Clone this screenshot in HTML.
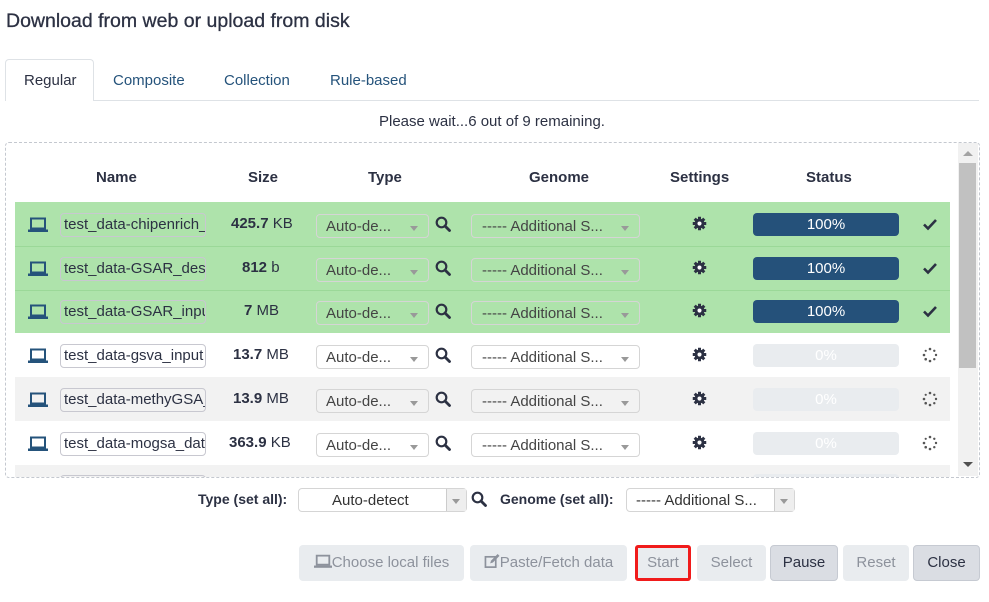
<!DOCTYPE html>
<html><head><meta charset="utf-8"><style>
*{box-sizing:border-box;margin:0;padding:0}
body{width:989px;height:602px;background:#fff;font-family:"Liberation Sans",sans-serif;color:#2c3143;position:relative;overflow:hidden;font-size:15px}
.a{position:absolute}
.t{white-space:nowrap}
.inp{position:absolute;height:24px;border:1px solid #c8c8d0;border-radius:4px;background:transparent;font-size:15px;line-height:22px;padding-left:3px;overflow:hidden;white-space:nowrap;color:#2c3143}
.sel{position:absolute;height:24px;border:1px solid #d5d5d5;border-radius:4px;background:transparent;font-size:15px;line-height:24px;padding-left:9px;white-space:nowrap;color:#444;overflow:hidden}
.sel:after{content:"";position:absolute;right:10px;top:11px;border-left:4px solid transparent;border-right:4px solid transparent;border-top:5px solid #999}
.bar{position:absolute;left:753px;width:146px;height:23px;border-radius:4px;text-align:center;line-height:23px;font-size:15px}
.btn{position:absolute;top:545px;height:36px;border-radius:4px;background:#e9ecef;color:#8d929c;font-size:15px;line-height:36px;text-align:center;white-space:nowrap}
.h{font-weight:bold;font-size:15px}
</style></head><body>
<div class="a t" style="left:6px;top:10px;font-size:19.5px;color:#2c3143;-webkit-text-stroke:0.3px #2c3143">Download from web or upload from disk</div>
<!-- tabs -->
<div class="a" style="left:5px;top:100px;width:974px;height:1px;background:#dee2e6"></div>
<div class="a" style="left:5px;top:59px;width:89px;height:42px;border:1px solid #dee2e6;border-bottom:none;border-radius:4px 4px 0 0;background:#fff"></div>
<div class="a t" style="left:24px;top:72px;color:#2c3143">Regular</div>
<div class="a t" style="left:113px;top:72px;color:#25537b">Composite</div>
<div class="a t" style="left:224px;top:72px;color:#25537b">Collection</div>
<div class="a t" style="left:330px;top:72px;color:#25537b">Rule-based</div>
<div class="a t" style="left:379px;top:113px;color:#2c3143">Please wait...6 out of 9 remaining.</div>
<!-- box -->
<div class="a" style="left:5px;top:142px;width:975px;height:336px;border:1px dashed #c4c8cf;border-radius:4px"></div>
<div class="a" style="left:958px;top:143px;width:20px;height:333px;background:#f1f1f1"></div>
<div class="a" style="left:959px;top:163px;width:17px;height:205px;background:#c1c1c1"></div>
<div class="a" style="left:963px;top:151px;border-left:5px solid transparent;border-right:5px solid transparent;border-bottom:5px solid #a3a3a3"></div>
<div class="a" style="left:963px;top:462px;border-left:5px solid transparent;border-right:5px solid transparent;border-top:5px solid #505050"></div>
<!-- headers -->
<div class="a t h" style="left:96px;top:169px">Name</div>
<div class="a t h" style="left:248px;top:169px">Size</div>
<div class="a t h" style="left:368px;top:169px">Type</div>
<div class="a t h" style="left:529px;top:169px">Genome</div>
<div class="a t h" style="left:670px;top:169px">Settings</div>
<div class="a t h" style="left:806px;top:169px">Status</div>
<!-- row backgrounds -->
<div class="a" style="left:15px;top:202px;width:935px;height:131px;background:#aee3ab"></div>
<div class="a" style="left:15px;top:246px;width:935px;height:1px;background:#9bd898"></div>
<div class="a" style="left:15px;top:290px;width:935px;height:1px;background:#9bd898"></div>
<div class="a" style="left:15px;top:377px;width:935px;height:44px;background:#f2f2f2"></div>
<div class="a" style="left:15px;top:465px;width:935px;height:12px;background:#f2f2f2;overflow:hidden">
  <div style="position:absolute;left:45px;top:10px;width:146px;height:20px;border:1px solid #c8c8d0;border-radius:4px"></div>
  <div style="position:absolute;left:738px;top:9px;width:146px;height:10px;background:#e9ecef;border-radius:4px"></div>
</div>

<svg width="0" height="0" style="position:absolute"><defs>
<symbol id="lap" viewBox="0 0 20 16"><rect x="3" y="1.5" width="14" height="10" fill="none" stroke="#25537b" stroke-width="2"/><rect x="0" y="12.5" width="20" height="2.5" fill="#25537b"/></symbol>
<symbol id="srch" viewBox="0 0 16 16"><circle cx="6.5" cy="6.5" r="4.8" fill="none" stroke="#2c3143" stroke-width="2.2"/><path d="M10 10L14.5 14.5" stroke="#2c3143" stroke-width="2.8" stroke-linecap="round"/></symbol>
<symbol id="gear" viewBox="0 0 16 16"><g fill="#2c3143"><circle cx="8" cy="8" r="5.2"/><rect x="6.4" y="0.8" width="3.2" height="14.4"/><rect x="0.8" y="6.4" width="14.4" height="3.2"/><rect x="6.4" y="0.8" width="3.2" height="14.4" transform="rotate(45 8 8)"/><rect x="6.4" y="0.8" width="3.2" height="14.4" transform="rotate(-45 8 8)"/></g><circle cx="8" cy="8" r="2.2" fill="#fff"/></symbol>
<symbol id="chk" viewBox="0 0 16 16"><path d="M2 8.5L6 12.5L14 4" fill="none" stroke="#2c3143" stroke-width="2.6"/></symbol>
<symbol id="spin" viewBox="0 0 16 16"><g fill="#555"><circle cx="8" cy="2" r="1.3"/><circle cx="12.3" cy="3.8" r="1.2"/><circle cx="14" cy="8" r="1.2"/><circle cx="12.3" cy="12.2" r="1.2"/><circle cx="8" cy="14" r="1.3"/><circle cx="3.7" cy="12.2" r="1.3"/><circle cx="2" cy="8" r="1.3"/><circle cx="3.7" cy="3.8" r="1.1"/></g></symbol>
</defs></svg>

<!-- row1 -->
<svg class="a" style="left:28px;top:217px" width="20" height="16"><use href="#lap"/></svg>
<div class="inp" style="left:60px;top:213px;width:146px">test_data-chipenrich_</div>
<div class="a t" style="left:231px;top:215px"><b>425.7</b> KB</div>
<div class="sel" style="left:316px;top:214px;width:113px">Auto-de...</div>
<svg class="a" style="left:435px;top:216px" width="16" height="16"><use href="#srch"/></svg>
<div class="sel" style="left:471px;top:214px;width:169px;padding-left:10px">----- Additional S...</div>
<svg class="a" style="left:692px;top:216px" width="15" height="15"><use href="#gear"/></svg>
<div class="bar" style="top:213px;background:#25517a;color:#fff">100%</div>
<svg class="a" style="left:922px;top:216px" width="16" height="16"><use href="#chk"/></svg>
<!-- row2 -->
<svg class="a" style="left:28px;top:261px" width="20" height="16"><use href="#lap"/></svg>
<div class="inp" style="left:60px;top:257px;width:146px">test_data-GSAR_desi</div>
<div class="a t" style="left:242px;top:259px"><b>812</b> b</div>
<div class="sel" style="left:316px;top:258px;width:113px">Auto-de...</div>
<svg class="a" style="left:435px;top:260px" width="16" height="16"><use href="#srch"/></svg>
<div class="sel" style="left:471px;top:258px;width:169px;padding-left:10px">----- Additional S...</div>
<svg class="a" style="left:692px;top:260px" width="15" height="15"><use href="#gear"/></svg>
<div class="bar" style="top:257px;background:#25517a;color:#fff">100%</div>
<svg class="a" style="left:922px;top:260px" width="16" height="16"><use href="#chk"/></svg>
<!-- row3 -->
<svg class="a" style="left:28px;top:304px" width="20" height="16"><use href="#lap"/></svg>
<div class="inp" style="left:60px;top:300px;width:146px">test_data-GSAR_inpu</div>
<div class="a t" style="left:244px;top:302px"><b>7</b> MB</div>
<div class="sel" style="left:316px;top:301px;width:113px">Auto-de...</div>
<svg class="a" style="left:435px;top:303px" width="16" height="16"><use href="#srch"/></svg>
<div class="sel" style="left:471px;top:301px;width:169px;padding-left:10px">----- Additional S...</div>
<svg class="a" style="left:692px;top:303px" width="15" height="15"><use href="#gear"/></svg>
<div class="bar" style="top:300px;background:#25517a;color:#fff">100%</div>
<svg class="a" style="left:922px;top:303px" width="16" height="16"><use href="#chk"/></svg>
<!-- row4 -->
<svg class="a" style="left:28px;top:348px" width="20" height="16"><use href="#lap"/></svg>
<div class="inp" style="left:60px;top:344px;width:146px">test_data-gsva_input</div>
<div class="a t" style="left:233px;top:346px"><b>13.7</b> MB</div>
<div class="sel" style="left:316px;top:345px;width:113px">Auto-de...</div>
<svg class="a" style="left:435px;top:347px" width="16" height="16"><use href="#srch"/></svg>
<div class="sel" style="left:471px;top:345px;width:169px;padding-left:10px">----- Additional S...</div>
<svg class="a" style="left:692px;top:347px" width="15" height="15"><use href="#gear"/></svg>
<div class="bar" style="top:344px;background:#e9ecef;color:#fff">0%</div>
<svg class="a" style="left:922px;top:347px" width="16" height="16"><use href="#spin"/></svg>
<!-- row5 -->
<svg class="a" style="left:28px;top:392px" width="20" height="16"><use href="#lap"/></svg>
<div class="inp" style="left:60px;top:388px;width:146px">test_data-methyGSA_</div>
<div class="a t" style="left:233px;top:390px"><b>13.9</b> MB</div>
<div class="sel" style="left:316px;top:389px;width:113px">Auto-de...</div>
<svg class="a" style="left:435px;top:391px" width="16" height="16"><use href="#srch"/></svg>
<div class="sel" style="left:471px;top:389px;width:169px;padding-left:10px">----- Additional S...</div>
<svg class="a" style="left:692px;top:391px" width="15" height="15"><use href="#gear"/></svg>
<div class="bar" style="top:388px;background:#e9ecef;color:#fff">0%</div>
<svg class="a" style="left:922px;top:391px" width="16" height="16"><use href="#spin"/></svg>
<!-- row6 -->
<svg class="a" style="left:28px;top:436px" width="20" height="16"><use href="#lap"/></svg>
<div class="inp" style="left:60px;top:432px;width:146px">test_data-mogsa_dat</div>
<div class="a t" style="left:229px;top:434px"><b>363.9</b> KB</div>
<div class="sel" style="left:316px;top:433px;width:113px">Auto-de...</div>
<svg class="a" style="left:435px;top:435px" width="16" height="16"><use href="#srch"/></svg>
<div class="sel" style="left:471px;top:433px;width:169px;padding-left:10px">----- Additional S...</div>
<svg class="a" style="left:692px;top:435px" width="15" height="15"><use href="#gear"/></svg>
<div class="bar" style="top:432px;background:#e9ecef;color:#fff">0%</div>
<svg class="a" style="left:922px;top:435px" width="16" height="16"><use href="#spin"/></svg>

<!-- set all -->
<div class="a t h" style="left:198px;top:491px;font-size:14px">Type (set all):</div>
<div class="sel" style="left:298px;top:488px;width:169px;padding-left:33px;color:#333">Auto-detect</div>
<div class="a" style="left:446px;top:489px;width:20px;height:22px;background:#eee;border-left:1px solid #ccc"></div>
<div class="a" style="left:452px;top:499px;border-left:4px solid transparent;border-right:4px solid transparent;border-top:5px solid #999"></div>
<svg class="a" style="left:471px;top:491px" width="16" height="16"><use href="#srch"/></svg>
<div class="a t h" style="left:500px;top:491px;font-size:14px">Genome (set all):</div>
<div class="sel" style="left:626px;top:488px;width:169px;padding-left:9px;color:#333">----- Additional S...</div>
<div class="a" style="left:774px;top:489px;width:20px;height:22px;background:#eee;border-left:1px solid #ccc"></div>
<div class="a" style="left:780px;top:499px;border-left:4px solid transparent;border-right:4px solid transparent;border-top:5px solid #999"></div>

<!-- buttons -->
<div class="btn" style="left:299px;width:165px"><svg width="18" height="15" style="vertical-align:-2px" viewBox="0 0 20 16"><rect x="3" y="1.5" width="14" height="10" fill="none" stroke="#8d929c" stroke-width="2"/><rect x="0" y="12.5" width="20" height="2.5" fill="#8d929c"/></svg>Choose local files</div>
<div class="btn" style="left:470px;width:157px"><svg width="16" height="15" style="vertical-align:-2px" viewBox="0 0 16 16"><rect x="1" y="3" width="11" height="11" fill="none" stroke="#8d929c" stroke-width="1.8"/><path d="M6 10L7 7L14 0L16 2L9 9Z" fill="#8d929c"/></svg>Paste/Fetch data</div>
<div class="btn" style="left:635px;width:56px;border:3px solid #f01b1b;border-radius:3px;line-height:30px;background:#e9ecef">Start</div>
<div class="btn" style="left:697px;width:69px">Select</div>
<div class="btn" style="left:770px;width:68px;background:#dadde3;color:#2c3143;border:1px solid #c6cad2;line-height:34px">Pause</div>
<div class="btn" style="left:843px;width:66px">Reset</div>
<div class="btn" style="left:913px;width:67px;background:#dadde3;color:#2c3143;border:1px solid #c6cad2;line-height:34px">Close</div>
</body></html>
